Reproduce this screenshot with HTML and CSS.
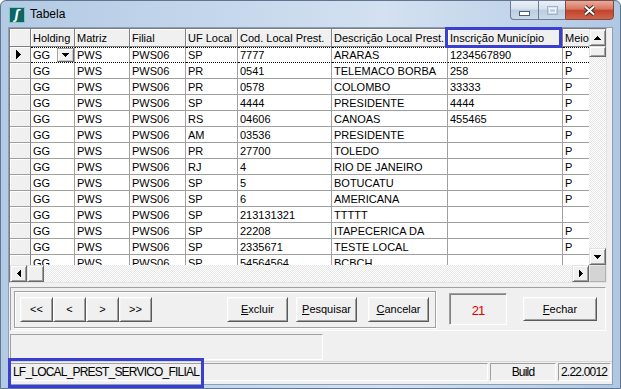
FILE: index.html
```html
<!DOCTYPE html>
<html lang="pt-BR">
<head>
    <meta charset="UTF-8">
    <meta name="viewport" content="width=device-width, initial-scale=1.0">
    <title>Tabela</title>
    <link rel="stylesheet" href="styles.css">
</head>
<body>

<div class="window">
    <div class="titlebar">
        <span class="app-icon">ʃ</span>
        <span class="title">Tabela</span>
        <div class="caption">
            <div class="cap-btn cap-min">
                <svg width="11" height="5"><rect x="0.5" y="0.5" width="10" height="4" fill="#fff" stroke="#4d5d73"/></svg>
            </div>
            <div class="cap-btn cap-max">
                <svg width="11" height="9"><rect x="0.5" y="0.5" width="10" height="8" fill="none" stroke="#a3b3c7"/><rect x="2.5" y="2.5" width="6" height="4" fill="none" stroke="#f2f6fa"/></svg>
            </div>
            <div class="cap-btn cap-close">
                <svg width="13" height="11"><path d="M2 1.5L11 9.5M11 1.5L2 9.5" stroke="#3d2a28" stroke-width="4"/><path d="M2 1.5L11 9.5M11 1.5L2 9.5" stroke="#fff" stroke-width="2"/></svg>
            </div>
        </div>
    </div>

    <div class="client">
        <div class="grid">
            <div class="grid-view">
                <table class="data">
                    <thead>
                        <tr>
                            <th class="ind c-ind"></th>
                            <th class="c-hold">Holding</th>
                            <th class="c-matriz">Matriz</th>
                            <th class="c-filial">Filial</th>
                            <th class="c-uf">UF Local</th>
                            <th class="c-cod">Cod. Local Prest.</th>
                            <th class="c-desc">Descrição Local Prest.</th>
                            <th class="c-insc">Inscrição Município</th>
                            <th class="c-meio">Meio</th>
                        </tr>
                    </thead>
                    <tbody>
                        <tr class="current">
                            <td class="ind"><svg class="pointer" width="5" height="9"><path d="M0 0h1v1h1v1h1v1h1v1h1v1H4v1H3v1H2v1H1v1H0z"/></svg></td>
                            <td>GG<span class="dd"><svg width="7" height="4"><path d="M0 0h7v1H6v1H5v1H4v1H3V3H2V2H1V1H0z"/></svg></span></td>
                            <td>PWS</td><td>PWS06</td><td>SP</td><td>7777</td><td>ARARAS</td><td>1234567890</td><td>P</td>
                        </tr>
                        <tr><td class="ind"></td><td>GG</td><td>PWS</td><td>PWS06</td><td>PR</td><td>0541</td><td>TELEMACO BORBA</td><td>258</td><td>P</td></tr>
                        <tr><td class="ind"></td><td>GG</td><td>PWS</td><td>PWS06</td><td>PR</td><td>0578</td><td>COLOMBO</td><td>33333</td><td>P</td></tr>
                        <tr><td class="ind"></td><td>GG</td><td>PWS</td><td>PWS06</td><td>SP</td><td>4444</td><td>PRESIDENTE</td><td>4444</td><td>P</td></tr>
                        <tr><td class="ind"></td><td>GG</td><td>PWS</td><td>PWS06</td><td>RS</td><td>04606</td><td>CANOAS</td><td>455465</td><td>P</td></tr>
                        <tr><td class="ind"></td><td>GG</td><td>PWS</td><td>PWS06</td><td>AM</td><td>03536</td><td>PRESIDENTE</td><td></td><td>P</td></tr>
                        <tr><td class="ind"></td><td>GG</td><td>PWS</td><td>PWS06</td><td>PR</td><td>27700</td><td>TOLEDO</td><td></td><td>P</td></tr>
                        <tr><td class="ind"></td><td>GG</td><td>PWS</td><td>PWS06</td><td>RJ</td><td>4</td><td>RIO DE JANEIRO</td><td></td><td>P</td></tr>
                        <tr><td class="ind"></td><td>GG</td><td>PWS</td><td>PWS06</td><td>SP</td><td>5</td><td>BOTUCATU</td><td></td><td>P</td></tr>
                        <tr><td class="ind"></td><td>GG</td><td>PWS</td><td>PWS06</td><td>SP</td><td>6</td><td>AMERICANA</td><td></td><td>P</td></tr>
                        <tr><td class="ind"></td><td>GG</td><td>PWS</td><td>PWS06</td><td>SP</td><td>213131321</td><td>TTTTT</td><td></td><td></td></tr>
                        <tr><td class="ind"></td><td>GG</td><td>PWS</td><td>PWS06</td><td>SP</td><td>22208</td><td>ITAPECERICA DA</td><td></td><td>P</td></tr>
                        <tr><td class="ind"></td><td>GG</td><td>PWS</td><td>PWS06</td><td>SP</td><td>2335671</td><td>TESTE LOCAL</td><td></td><td>P</td></tr>
                        <tr><td class="ind"></td><td>GG</td><td>PWS</td><td>PWS06</td><td>SP</td><td>54564564</td><td>BCBCH</td><td></td><td></td></tr>
                    </tbody>
                </table>
            </div>

            <div class="vscroll">
                <div class="sb-btn"><svg width="7" height="4"><path d="M3 0h1v1h1v1h1v1h1v1H0V3h1V2h1V1h1z"/></svg></div>
                <div class="thumb thumb-v"></div>
                <div class="track"></div>
                <div class="sb-btn"><svg width="7" height="4"><path d="M0 0h7v1H6v1H5v1H4v1H3V3H2V2H1V1H0z"/></svg></div>
            </div>

            <div class="hscroll">
                <div class="sb-btn"><svg width="4" height="7"><path d="M4 0v7H3V6H2V5H1V4H0V3h1V2h1V1h1V0z"/></svg></div>
                <div class="thumb thumb-h"></div>
                <div class="track"></div>
                <div class="sb-btn"><svg width="4" height="7"><path d="M0 0h1v1h1v1h1v1h1v1H3v1H2v1H1v1H0z"/></svg></div>
            </div>

            <div class="corner"></div>
        </div>

        <div class="nav-panel">
            <div class="btn-group">
                <div class="nav-btns">
                    <button class="btn nav">&lt;&lt;</button>
                    <button class="btn nav">&lt;</button>
                    <button class="btn nav">&gt;</button>
                    <button class="btn nav">&gt;&gt;</button>
                </div>
                <button class="btn act btn-excluir"><u>E</u>xcluir</button>
                <button class="btn act btn-pesquisar"><u>P</u>esquisar</button>
                <button class="btn act btn-cancelar"><u>C</u>ancelar</button>
            </div>
            <div class="count">21</div>
            <button class="btn btn-fechar"><u>F</u>echar</button>
        </div>

        <div class="info-panel"></div>

        <div class="statusbar">
            <div class="sb-panel sb-main">LF_LOCAL_PREST_SERVICO_FILIAL</div>
            <div class="sb-panel sb-build">Build</div>
            <div class="sb-panel sb-version">2.22.0012</div>
        </div>
    </div>

    <div class="mark mark-header"></div>
    <div class="mark mark-status"></div>
</div>

</body>
</html>
```

FILE: styles.css
```css
* {
    box-sizing: border-box;
}
html, body {
    margin: 0;
    padding: 0;
    background: #fff;
}
body {
    width: 621px;
    height: 389px;
    overflow: hidden;
    font-family: "Liberation Sans", Arial, sans-serif;
    font-size: 11px;
    color: #000;
}

/* window frame */
.window {
    position: relative;
    width: 621px;
    height: 389px;
    border: 1px solid #60758f;
    border-radius: 6px 6px 0 0;
    background: linear-gradient(90deg, #b3cae4 0%, #c2d5eb 30%, #d3e1f1 62%, #c3d5ea 82%, #b0c7e2 100%);
    display: flex;
    flex-direction: column;
}
.titlebar {
    height: 26px;
    display: flex;
    align-items: flex-start;
    padding-left: 8px;
}
.app-icon {
    margin-top: 6px;
    width: 16px;
    height: 16px;
    background: #0d6664;
    border: 1px solid #86c3bf;
    color: #fff;
    font-family: "DejaVu Sans", sans-serif;
    font-weight: bold;
    font-style: italic;
    font-size: 12px;
    line-height: 14px;
    text-align: center;
}
.title {
    margin: 6px 0 0 5px;
    font-size: 12px;
    line-height: 14px;
}
.caption {
    margin-left: auto;
    margin-right: 6px;
    margin-top: -1px;
    display: flex;
}
.cap-btn {
    height: 20px;
    display: flex;
    align-items: center;
    justify-content: center;
    border: 1px solid #6a7c94;
    background: linear-gradient(#eaf0f7, #d6e1ee 45%, #bccde1 50%, #cbd9ea);
}
.cap-min {
    width: 28px;
    border-right: none;
    border-radius: 0 0 0 4px;
    padding-top: 7px;
}
.cap-max {
    width: 27px;
    border-right: none;
}
.cap-close {
    width: 49px;
    border-color: #7b4a43;
    border-radius: 0 0 4px 0;
    background: linear-gradient(#e9ab9c, #d8765f 45%, #c3432b 52%, #d0644c);
}

/* client area */
.client {
    flex: 1;
    margin: 0 7px 3px 7px;
    border: 1px solid #8c9fb8;
    background: #f0f0f0;
    display: flex;
    flex-direction: column;
}

/* data grid */
.grid {
    width: 598px;
    height: 255px;
    border: 1px solid;
    border-color: #7c7c7c #e3e3e3 #e3e3e3 #7c7c7c;
    background: #fff;
    display: grid;
    grid-template-columns: 579px 17px;
    grid-template-rows: 236px 17px;
}
.grid-view {
    overflow: hidden;
}
.data {
    border-collapse: separate;
    border-spacing: 0;
    table-layout: fixed;
    width: 593px;
}
.data th, .data td {
    height: 16px;
    padding: 0 2px;
    line-height: 14px;
    white-space: nowrap;
    overflow: hidden;
    text-align: left;
    font-weight: normal;
    border-right: 1px solid #a0a0a0;
    border-bottom: 1px solid #a0a0a0;
}
.data th {
    height: 18px;
    background: #f0f0f0;
    border-right-color: #808080;
    border-bottom-color: #808080;
    box-shadow: inset 1px 1px #fff;
}
.c-ind { width: 21px; }
.c-hold { width: 44px; }
.c-matriz { width: 55px; }
.c-filial { width: 56px; }
.c-uf { width: 52px; }
.c-cod { width: 94px; }
.c-desc { width: 116px; }
.c-insc { width: 115px; }
.c-meio { width: 40px; }

.data td.ind {
    background: #f0f0f0;
    border-right-color: #808080;
    box-shadow: inset 1px 1px #fff;
    padding: 0;
}
.pointer {
    display: block;
    margin: 0 auto 0 6px;
}
.current td:not(.ind) {
    border-top: 1px dotted #000;
    border-bottom: 1px dotted #000;
}
.dd {
    float: right;
    width: 17px;
    height: 14px;
    margin-right: -2px;
    display: flex;
    align-items: center;
    justify-content: center;
    background: #f0f0f0;
    border: 1px solid;
    border-color: #a0a0a0 #696969 #696969 #a0a0a0;
    box-shadow: inset 1px 1px #fff, inset -1px -1px #c8c8c8;
}

/* scrollbars */
.vscroll, .hscroll {
    display: flex;
    background: repeating-conic-gradient(#fff 0 25%, #e6e6e6 0 50%) 0 0 / 2px 2px;
}
.vscroll {
    flex-direction: column;
}
.track {
    flex: 1;
}
.sb-btn, .thumb {
    width: 17px;
    height: 17px;
    background: #f0f0f0;
    border: 1px solid;
    border-color: #e3e3e3 #696969 #696969 #e3e3e3;
    box-shadow: inset 1px 1px #fff, inset -1px -1px #a0a0a0;
    display: flex;
    align-items: center;
    justify-content: center;
}
.thumb-v {
    height: 11px;
}
.corner {
    background: #d4d4d4;
    border: 1px solid;
    border-color: #e8e8e8 #b0b0b0 #b0b0b0 #e8e8e8;
}

/* navigator panel */
.nav-panel {
    margin: 4px 0 0 1px;
    width: 596px;
    height: 44px;
    border: 1px solid;
    border-color: #a0a0a0 #fff #fff #a0a0a0;
    display: flex;
    align-items: center;
    padding-left: 3px;
}
.btn-group {
    width: 422px;
    height: 37px;
    border: 1px solid #a0a0a0;
    box-shadow: inset 1px 1px #fff, 1px 1px #fff;
    display: flex;
    align-items: center;
    padding-left: 5px;
}
.nav-btns {
    display: flex;
}
.btn {
    height: 25px;
    padding: 0;
    font-family: "Liberation Sans", Arial, sans-serif;
    font-size: 11px;
    color: #000;
    background: #f0f0f0;
    border: 1px solid;
    border-color: #fff #5a5a5a #5a5a5a #fff;
    box-shadow: inset 1px 1px #f4f4f4, inset -1px -1px #a0a0a0;
}
.nav {
    width: 33px;
}
.act {
    width: 61px;
}
.btn-excluir {
    margin-left: 75px;
}
.btn-pesquisar {
    margin-left: 8px;
}
.btn-cancelar {
    margin-left: 11px;
}
.count {
    margin-left: 13px;
    width: 58px;
    height: 32px;
    padding-top: 9px;
    border: 1px solid;
    border-color: #a0a0a0 #fff #fff #a0a0a0;
    box-shadow: inset 1px 1px #808080;
    color: #e00000;
    font-size: 13px;
    letter-spacing: -1px;
    text-align: center;
}
.btn-fechar {
    margin-left: 16px;
    width: 74px;
    height: 24px;
}

/* lower panels */
.info-panel {
    margin: 3px 0 0 1px;
    width: 313px;
    height: 26px;
    border: 1px solid;
    border-color: #a0a0a0 #fff #fff #a0a0a0;
}
.statusbar {
    margin-top: 1px;
    height: 23px;
    border-top: 1px solid #d6d6d6;
    padding: 1px 1px 0 1px;
    display: flex;
    gap: 2px;
}
.sb-panel {
    height: 18px;
    border: 1px solid;
    border-color: #a0a0a0 #fff #fff #a0a0a0;
    padding: 0 2px;
    font-size: 12px;
    line-height: 16px;
    letter-spacing: -0.8px;
    white-space: nowrap;
}
.sb-main {
    width: 478px;
}
.sb-build {
    width: 66px;
    text-align: center;
}
.sb-version {
    width: 53px;
}

/* highlight boxes */
.mark {
    position: absolute;
    border: 3px solid #3b3fcf;
}
.mark-header {
    left: 444px;
    top: 26px;
    width: 117px;
    height: 21px;
}
.mark-status {
    left: 7px;
    top: 357px;
    width: 196px;
    height: 30px;
}
```
